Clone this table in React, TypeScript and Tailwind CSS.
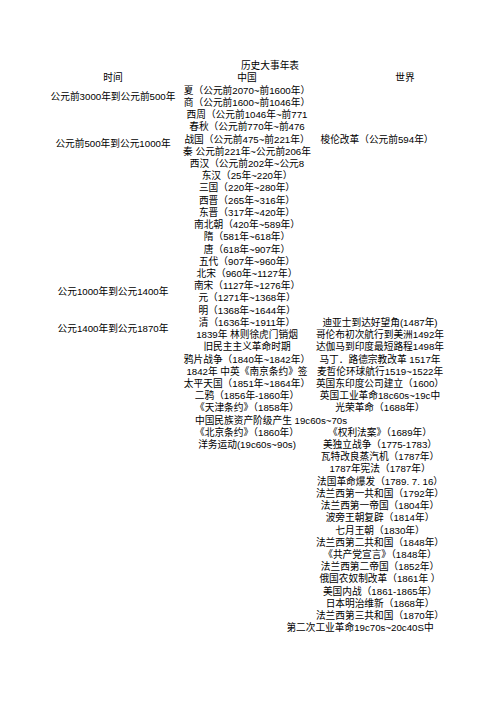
type Row = {
    cn?: string;
    world?: string;
    cnClass?: string;
    worldClass?: string;
};

const rows: Row[] = [
    { cn: "夏（公元前2070~前1600年）" },
    { cn: "商（公元前1600~前1046年）" },
    { cn: "西周（公元前1046年~前771" },
    { cn: "春秋（公元前770年~前476" },
    { cn: "战国（公元前475~前221年）", world: "梭伦改革（公元前594年）", worldClass: "pr-[6px]" },
    { cn: "秦 公元前221年~公元前206年" },
    { cn: "西汉（公元前202年~公元8" },
    { cn: "东汉（25年~220年）" },
    { cn: "三国（220年~280年）" },
    { cn: "西晋（265年~316年）" },
    { cn: "东晋（317年~420年）" },
    { cn: "南北朝（420年~589年）" },
    { cn: "隋（581年~618年）" },
    { cn: "唐（618年~907年）" },
    { cn: "五代（907年~960年）" },
    { cn: "北宋（960年~1127年）" },
    { cn: "南宋（1127年~1276年）" },
    { cn: "元（1271年~1368年）" },
    { cn: "明（1368年~1644年）" },
    { cn: "清（1636年~1911年）", world: "迪亚士到达好望角(1487年)" },
    { cn: "1839年 林则徐虎门销烟", world: "哥伦布初次航行到美洲1492年" },
    { cn: "旧民主主义革命时期", world: "达伽马到印度最短路程1498年" },
    { cn: "鸦片战争（1840年~1842年）", world: "马丁．路德宗教改革 1517年" },
    { cn: "1842年 中英《南京条约》签", world: "麦哲伦环球航行1519~1522年" },
    { cn: "太平天国（1851年~1864年）", world: "英国东印度公司建立（1600）" },
    { cn: "二鸦（1856年-1860年）", world: "英国工业革命18c60s~19c中" },
    { cn: "《天津条约》（1858年）", world: "光荣革命（1688年）" },
    { cn: "中国民族资产阶级产生 19c60s~70s", cnClass: "justify-start pl-[19px]" },
    { cn: "《北京条约》（1860年）", world: "《权利法案》（1689年）" },
    { cn: "洋务运动(19c60s~90s)", world: "美独立战争（1775-1783）" },
    { world: "瓦特改良蒸汽机（1787年）" },
    { world: "1787年宪法（1787年）" },
    { world: "法国革命爆发（1789. 7. 16）" },
    { world: "法兰西第一共和国（1792年）" },
    { world: "法兰西第一帝国（1804年）" },
    { world: "波旁王朝复辟（1814年）" },
    { world: "七月王朝（1830年）" },
    { world: "法兰西第二共和国（1848年）" },
    { world: "《共产党宣言》（1848年）" },
    { world: "法兰西第二帝国（1852年）" },
    { world: "俄国农奴制改革（1861年 ）" },
    { world: "美国内战（1861-1865年）" },
    { world: "日本明治维新（1868年）" },
    { world: "法兰西第三共和国（1870年）" },
    { world: "第二次工业革命19c70s~20c40S中", worldClass: "pr-[40px]" },
];

const cell = "flex items-center justify-center whitespace-nowrap";

const App = () => {
    return (
        <div className="min-h-[702px] w-[496px] bg-white pt-[60px] pl-[50px] text-[9.7px] leading-none text-black font-['Liberation_Sans','Noto_Sans_CJK_SC',sans-serif]">
            <div className="grid grid-cols-[126px_142px_124px] grid-rows-[repeat(47,12.23px)]">
                {/* time column, merged cells */}
                <div className={`${cell} col-start-1 row-start-2`}>时间</div>
                <div className={`${cell} col-start-1 row-start-3 row-span-2`}>公元前3000年到公元前500年</div>
                <div className={`${cell} col-start-1 row-start-5 row-span-6 pb-[4px]`}>公元前500年到公元1000年</div>
                <div className={`${cell} col-start-1 row-start-18 row-span-4`}>公元1000年到公元1400年</div>
                <div className={`${cell} col-start-1 row-start-22 row-span-2`}>公元1400年到公元1870年</div>

                {/* title + header */}
                <div className={`${cell} col-start-2 row-start-1 pl-[46px]`}>历史大事年表</div>
                <div className={`${cell} col-start-2 row-start-2`}>中国</div>
                <div className={`${cell} col-start-3 row-start-2 pl-[50px]`}>世界</div>

                {rows.map((r, i) => (
                    <div key={i} className="contents">
                        <div className={`${cell} col-start-2 ${r.cnClass ?? ""}`}>{r.cn ?? ""}</div>
                        <div className={`${cell} col-start-3 ${r.worldClass ?? ""}`}>{r.world ?? ""}</div>
                    </div>
                ))}
            </div>
        </div>
    );
};

export default App;
